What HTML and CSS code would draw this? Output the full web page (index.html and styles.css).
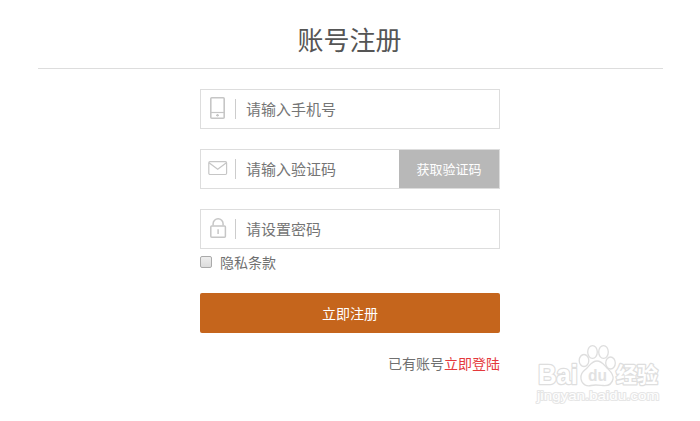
FILE: index.html
```html
<!DOCTYPE html>
<html lang="zh-CN">
<head>
<meta charset="utf-8">
<title>账号注册</title>
<link rel="stylesheet" href="styles.css">
</head>
<body>
<main class="page">
  <h1 class="title">账号注册</h1>
  <form class="form">
    <label class="field">
      <span class="icon"><svg width="16" height="24" viewBox="0 0 16 24" fill="none" stroke="#c6c6c6"><rect x=".8" y="1.8" width="13.4" height="20.4" rx="1" stroke-width="1.6"/><path d="M1 16.5h13" stroke-width="1.2"/><path d="M6 19.3h3M7.5 18.1v2.4" stroke-width="1.3"/></svg></span>
      <input class="input" type="text" placeholder="请输入手机号">
    </label>
    <div class="field">
      <span class="icon"><svg width="20" height="16" viewBox="0 0 20 16" fill="none" stroke="#c6c6c6" stroke-width="1.2"><rect x=".8" y="1.7" width="17.8" height="12.8" rx="1.2"/><path d="M1 2.7l8.7 6.6 8.7-6.6"/></svg></span>
      <input class="input" type="text" placeholder="请输入验证码">
      <button class="code" type="button">获取验证码</button>
    </div>
    <label class="field">
      <span class="icon"><svg width="17" height="22" viewBox="0 0 17 22" fill="none" stroke="#c6c6c6" stroke-width="1.5"><rect x=".8" y="9" width="14.6" height="11.3" rx="1"/><path d="M3.1 8.5V6.7a5 5 0 0 1 10 0V8.5"/><path d="M8.1 12.3v4.8"/></svg></span>
      <input class="input" type="password" placeholder="请设置密码">
    </label>
    <label class="terms"><input class="check" type="checkbox"><span>隐私条款</span></label>
    <button class="submit" type="button">立即注册</button>
    <p class="login">已有账号<a class="link">立即登陆</a></p>
  </form>
</main>
<svg class="watermark" width="130" height="64" viewBox="0 0 130 64">
  <g class="mark">
    <ellipse cx="49" cy="18.5" rx="4.8" ry="6"/>
    <ellipse cx="57.5" cy="10" rx="4.8" ry="6.4"/>
    <ellipse cx="68.5" cy="10" rx="4.8" ry="6.4"/>
    <ellipse cx="75.5" cy="21" rx="4.8" ry="6"/>
    <path d="M62 19c5 0 7 4 10 7s7 6 6 11-5 7-10 6.500-8-1-12 0-9-.5-10-6.500 3-8 6-11 5-7 10-7z"/>
  </g>
  <text class="brand" x="3" y="42" textLength="40" lengthAdjust="spacingAndGlyphs">Bai</text>
  <text class="du" x="53" y="39" textLength="19" lengthAdjust="spacingAndGlyphs">du</text>
  <text class="cn" x="81" y="40">经验</text>
  <text class="url" x="2" y="58" textLength="122" lengthAdjust="spacingAndGlyphs">jingyan.baidu.com</text>
</svg>
</body>
</html>
```

FILE: styles.css
```css
* { box-sizing: border-box; }
body {
  margin: 0;
  background: #fff;
  color: #666;
  font: 14px/20px "Noto Sans CJK SC", sans-serif;
}
.page { padding: 12px 38px 0 38px; }
.title {
  margin: 0 -1px 0 0;
  padding-right: 2px;
  height: 57px;
  border-bottom: 1px solid #ddd;
  color: #555;
  font-size: 26px;
  font-weight: 400;
  line-height: 53px;
  text-align: center;
}
.form { width: 300px; margin: 20px 0 0 162px; }
.field {
  display: flex;
  align-items: center;
  height: 40px;
  margin-bottom: 20px;
  border: 1px solid #ddd;
}
.icon {
  display: flex;
  align-items: center;
  justify-content: center;
  flex: none;
  width: 35px;
  height: 20px;
  padding-bottom: 2px;
  border-right: 1px solid #ccc;
}
.icon svg { flex: none; }
.input {
  flex: 1;
  min-width: 0;
  height: 38px;
  padding: 0 0 0 10px;
  border: 0;
  outline: 0;
  background: none;
  font: 15px/38px "Noto Sans CJK SC", sans-serif;
}
.input::placeholder { color: #757575; }
.code {
  width: 100px;
  height: 38px;
  padding: 0;
  border: 0;
  background: #b8b8b8;
  color: #fff;
  font: 13px/38px "Noto Sans CJK SC", sans-serif;
}
.terms {
  display: flex;
  align-items: center;
  gap: 8px;
  height: 20px;
  margin-top: -17px;
  color: #707070;
}
.check {
  appearance: none;
  width: 12px;
  height: 12px;
  margin: 0;
  border: 1px solid #aaa;
  border-radius: 2px;
  background: linear-gradient(#eee, #dcdcdc);
}
.submit {
  display: block;
  width: 300px;
  height: 40px;
  margin-top: 21px;
  padding: 0;
  border: 0;
  border-radius: 2px;
  background: #c5651c;
  color: #fff;
  font: 14px/40px "Noto Sans CJK SC", sans-serif;
}
.login { margin: 20px 0 0; color: #707070; text-align: right; }
.link { color: #e4393c; }
.watermark { position: absolute; left: 535px; top: 342px; }
.watermark text { paint-order: stroke; stroke-linejoin: round; fill: #fff; stroke: #dedede; }
.mark { fill: #fff; stroke: #dedede; stroke-width: 1.3; }
.brand { font: bold 28px "Liberation Sans", sans-serif; stroke-width: 2.5px; }
.watermark .du { font: bold 16px "Liberation Sans", sans-serif; fill: #e2e2e2; stroke: none; }
.cn { font: bold 21px "Noto Sans CJK SC", sans-serif; stroke-width: 2.5px; }
.watermark .url { font: 13.5px "Liberation Sans", sans-serif; stroke: #e6e6e6; stroke-width: 2px; }
```
